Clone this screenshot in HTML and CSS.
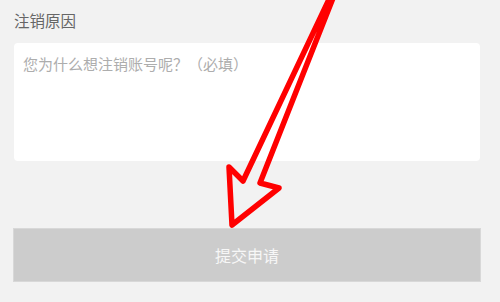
FILE: index.html
```html
<!DOCTYPE html>
<html lang="zh">
<head>
<meta charset="utf-8">
<link rel="stylesheet" href="styles.css">
</head>
<body>
<div class="page">
  <div class="label">注销原因</div>
  <div class="reason-box">
    <div class="placeholder">您为什么想注销账号呢？（必填）</div>
  </div>
  <div class="submit">提交申请</div>
</div>
<svg class="arrow" width="500" height="302" viewBox="0 0 500 302">
  <polygon points="350,-45 260,183 279,188 232,225 229,167 243,181" fill="none" stroke="#ff0000" stroke-width="5.5" stroke-linejoin="round"/>
</svg>
</body>
</html>
```
FILE: styles.css
```css
html, body {
  margin: 0;
  padding: 0;
  background: #f2f2f2;
  width: 500px;
  height: 302px;
  overflow: hidden;
  font-family: "Noto Sans CJK SC", "Noto Sans", sans-serif;
}
.page {
  padding: 10px 19px 0 13px;
  display: flex;
  flex-direction: column;
}
.label {
  font-size: 15.5px;
  line-height: 21px;
  color: #666666;
  padding-left: 1px;
}
.reason-box {
  margin: 12px 1px 0 1px;
  height: 118px;
  background: #ffffff;
  border-radius: 4px;
  box-sizing: border-box;
  padding: 10px 9px;
}
.placeholder {
  font-size: 15px;
  line-height: 21px;
  color: #adadad;
}
.submit {
  margin-top: 67px;
  height: 54px;
  box-sizing: border-box;
  background: #cccccc;
  border: 1px solid #d8d8d8;
  color: #f7f7f7;
  font-size: 16px;
  display: flex;
  align-items: center;
  justify-content: center;
}
.arrow {
  position: absolute;
  left: 0;
  top: 0;
}
```
